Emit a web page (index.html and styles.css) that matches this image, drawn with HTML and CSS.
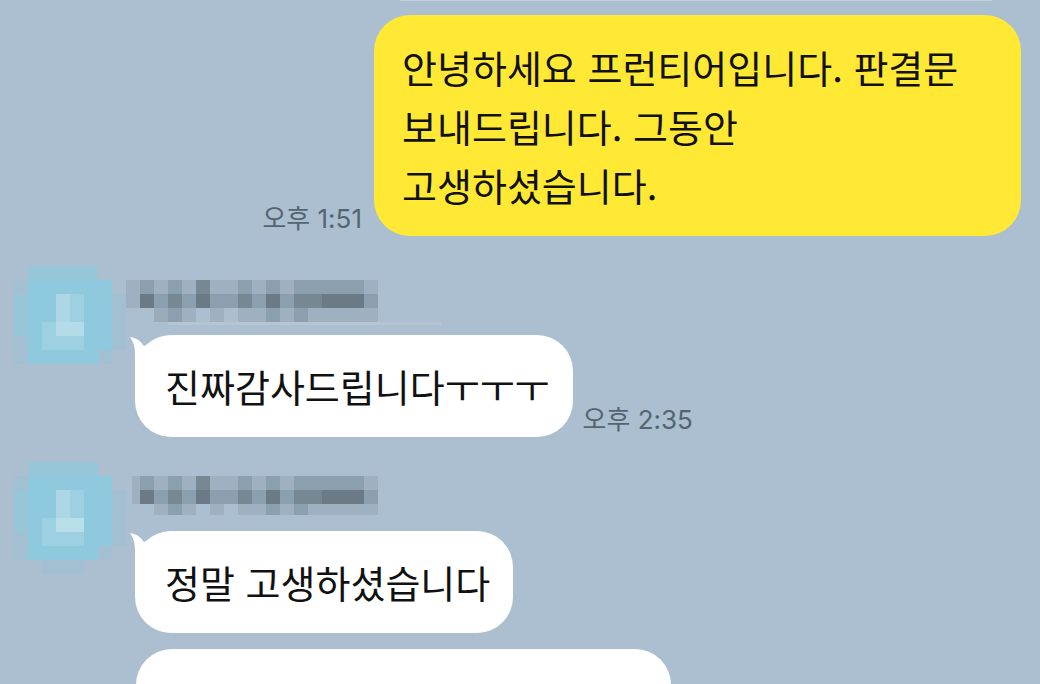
FILE: index.html
```
<!DOCTYPE html>
<html lang="ko">
<head>
    <meta charset="UTF-8">
    <meta name="viewport" content="width=device-width, initial-scale=1.0">
    <title>채팅</title>
    <link rel="stylesheet" href="styles.css">
</head>
<body>
    <main class="chat">
        <div class="prev-edge"></div>

        <div class="row mine">
            <time class="time">오후 1:51</time>
            <p class="bubble yellow">안녕하세요 프런티어입니다. 판결문 보내드립니다. 그동안 고생하셨습니다.</p>
        </div>

        <section class="row theirs">
            <svg class="avatar" viewBox="0 0 8 8" shape-rendering="crispEdges" aria-hidden="true">
                <path fill="#a3c0d2" d="M0 1h1v6H0zM6 1h1v6H6zM7 2h1v4H7z"/>
                <path fill="#97c6d8" d="M1 0h5v1H1zM0 2h1v3H0z"/>
                <path fill="#8fc9dd" d="M1 1h6v5H1zM1 6h5v1H1z"/>
                <path fill="#aed7e6" d="M3 2h1v2H3z"/>
                <path fill="#9dd0e0" d="M4 2h1v2H4zM2 4h1v1H2zM2 5h3v1H2z"/>
                <path fill="#b5dbe8" d="M3 4h2v1H3z"/>
            </svg>
            <div class="message">
                <svg class="name" viewBox="0 0 18 3" shape-rendering="crispEdges" aria-hidden="true">
                    <path fill="#9fb1c1" d="M0 0h18v2H0zM4 2h1v1H4zM6 2h1v1H6zM8 2h2v1H8zM11 2h1v1h-1zM13 2h5v1h-5z"/>
                    <path fill="#8c9fae" d="M1 0h1v1H1zM3 0h1v1H3zM8 0h1v1H8zM10 0h1v1h-1zM12 0h5v1h-5zM2 1h1v1H2zM4 1h1v1H4zM6 1h2v1H6zM9 1h1v1H9zM11 1h1v1h-1zM17 1h1v1h-1zM3 2h1v1H3zM10 2h1v1h-1zM12 2h1v1h-1z"/>
                    <path fill="#788893" d="M5 0h1v1H5zM3 1h1v1H3zM8 1h1v1H8zM12 1h2v1h-2z"/>
                    <path fill="#6b7a85" d="M1 1h1v1H1zM5 1h1v1H5zM10 1h1v1h-1zM14 1h3v1h-3z"/>
                    <path fill="#9aabba" d="M2 2h1v1H2z"/>
                </svg>
                <div class="name-line"></div>
                <div class="body">
                    <p class="bubble tailed">진짜감사드립니다ㅜㅜㅜ
                        <svg class="tail" viewBox="0 0 20 40" aria-hidden="true"><path fill="#fff" d="M0 2Q9 3 14 11L20 8V40H5V19Q5 9 0 2Z"/></svg>
                    </p>
                    <time class="time">오후 2:35</time>
                </div>
            </div>
        </section>

        <section class="row theirs">
            <svg class="avatar" viewBox="0 0 8 8" shape-rendering="crispEdges" aria-hidden="true">
                <path fill="#a3c0d2" d="M0 1h1v6H0zM6 1h1v6H6zM7 2h1v4H7zM2 7h3v1H2z"/>
                <path fill="#97c6d8" d="M1 0h5v1H1zM0 2h1v3H0z"/>
                <path fill="#8fc9dd" d="M1 1h6v5H1zM1 6h5v1H1z"/>
                <path fill="#aed7e6" d="M3 2h1v2H3z"/>
                <path fill="#9dd0e0" d="M4 2h1v2H4zM2 4h1v1H2zM2 5h3v1H2z"/>
                <path fill="#b9dfe9" d="M3 4h2v1H3z"/>
            </svg>
            <div class="message">
                <svg class="name" viewBox="0 0 18 3" shape-rendering="crispEdges" aria-hidden="true">
                    <path fill="#9fb1c1" d="M.4 0H18v2H.4zM4 2h1v.8H4zM6 2h1v.8H6zM8 2h2v.8H8zM11 2h1v.8h-1zM13 2h5v.8h-5z"/>
                    <path fill="#8c9fae" d="M1 0h1v1H1zM3 0h1v1H3zM8 0h1v1H8zM10 0h1v1h-1zM12 0h5v1h-5zM2 1h1v1H2zM4 1h1v1H4zM6 1h2v1H6zM9 1h1v1H9zM11 1h1v1h-1zM17 1h1v1h-1zM3 2h1v.8H3zM10 2h1v.8h-1zM12 2h1v.8h-1z"/>
                    <path fill="#788893" d="M5 0h1v1H5zM3 1h1v1H3zM8 1h1v1H8zM12 1h2v1h-2z"/>
                    <path fill="#6b7a85" d="M1 1h1v1H1zM5 1h1v1H5zM10 1h1v1h-1zM14 1h3v1h-3z"/>
                    <path fill="#9fb1c1" d="M2 2h1v.8H2z"/>
                </svg>
                <div class="body">
                    <p class="bubble tailed">정말 고생하셨습니다
                        <svg class="tail" viewBox="0 0 20 40" aria-hidden="true"><path fill="#fff" d="M0 2Q9 3 14 11L20 8V40H5V19Q5 9 0 2Z"/></svg>
                    </p>
                </div>
                <div class="bubble next"></div>
            </div>
        </section>
    </main>
</body>
</html>
```
FILE: styles.css
```
* {
    box-sizing: border-box;
}

body {
    margin: 0;
    background-color: #abbfd1;
    color: #111;
    font-family: "Noto Sans CJK KR", sans-serif;
}

.chat {
    height: 100vh;
    overflow: hidden;
}

.prev-edge {
    height: 1px;
    margin: 0 48px 14px 400px;
    background-color: #c3d0dc;
}

.row {
    display: flex;
}

.mine {
    justify-content: flex-end;
    align-items: flex-end;
    gap: 12px;
    padding-right: 19px;
    margin-bottom: 30px;
}

.bubble {
    margin: 0;
    border-radius: 36px;
    background-color: #fff;
    font-size: 38px;
    line-height: 58px;
    word-break: keep-all;
}

.yellow {
    max-width: 647px;
    padding: 22px 28px;
    background-color: #ffe934;
    line-height: 59px;
}

.time {
    color: #566470;
    font-family: Inter, "Noto Sans CJK KR", sans-serif;
    font-size: 26px;
    line-height: 34px;
    white-space: nowrap;
}

.theirs {
    padding-left: 14px;
    margin-bottom: 25px;
}

.avatar {
    flex: none;
    width: 112px;
    height: 112px;
}

.message {
    flex: 1;
    padding-top: 14px;
}

.name {
    display: block;
    width: 252px;
    height: 42px;
}

.name-line {
    width: 273px;
    height: 3px;
    margin: 0 0 -3px 42px;
    background-color: #b5c5d4;
}

.body {
    display: flex;
    align-items: flex-end;
    gap: 10px;
    padding-left: 9px;
    margin-top: 13px;
}

.tailed {
    position: relative;
    padding: 22px 23px 22px 30px;
}

.tail {
    position: absolute;
    top: 0;
    left: -5px;
    width: 20px;
    height: 40px;
}

.next {
    width: 535px;
    height: 102px;
    margin: 16px 0 0 10px;
}
```
